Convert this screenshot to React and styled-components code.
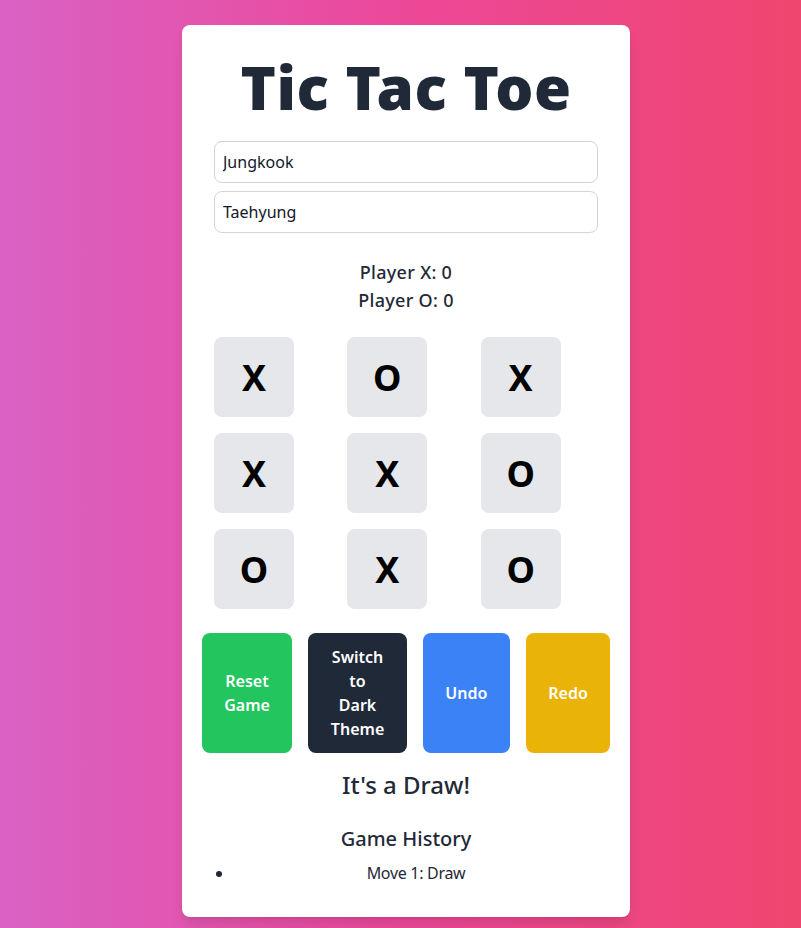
import React, { useState } from 'react';
import styled, { createGlobalStyle } from 'styled-components';

const GlobalStyle = createGlobalStyle`
    * {
        box-sizing: border-box;
    }
    body {
        margin: 0;
        font-family: "Noto Sans", "Open Sans", sans-serif;
    }
`

const board = ['X', 'O', 'X', 'X', 'X', 'O', 'O', 'X', 'O'];

const App = () => {
    const [playerX, setPlayerX] = useState('Jungkook');
    const [playerO, setPlayerO] = useState('Taehyung');

    return (
        <Page>
            <GlobalStyle />
            <Card>
                <Title>Tic Tac Toe</Title>
                <NameInput value={playerX} onChange={(e) => setPlayerX(e.target.value)} />
                <NameInput value={playerO} onChange={(e) => setPlayerO(e.target.value)} />
                <Scores>
                    <ScoreLine>Player X: 0</ScoreLine>
                    <ScoreLine>Player O: 0</ScoreLine>
                </Scores>
                <Board>
                    {board.map((mark, i) => (
                        <Cell key={i}>{mark}</Cell>
                    ))}
                </Board>
                <Controls>
                    <ActionButton color="#22c55e">Reset Game</ActionButton>
                    <ActionButton color="#1f2937">Switch to Dark Theme</ActionButton>
                    <ActionButton color="#3b82f6">Undo</ActionButton>
                    <ActionButton color="#eab308">Redo</ActionButton>
                </Controls>
                <Status>It's a Draw!</Status>
                <HistoryTitle>Game History</HistoryTitle>
                <HistoryList>
                    <HistoryItem>Move 1: Draw</HistoryItem>
                </HistoryList>
            </Card>
        </Page>
    )
}

const Page = styled.div`
    min-height: 100vh;
    display: flex;
    justify-content: center;
    align-items: flex-start;
    padding: 25px 0 12px 11px;
    background: linear-gradient(to right, #d962c4 0%, #ec4899 50%, #ef4670 100%);
`

const Card = styled.div`
    width: 448px;
    background: #ffffff;
    border-radius: 8px;
    padding: 32px;
    box-shadow: 0 10px 15px -3px rgba(0, 0, 0, 0.1), 0 4px 6px -4px rgba(0, 0, 0, 0.1);
    display: flex;
    flex-direction: column;
    color: #1f2937;
`

const Title = styled.h1`
    margin: 0 0 24px;
    font-size: 60px;
    line-height: 1;
    font-weight: 900;
    letter-spacing: 0.5px;
    text-align: center;
    color: #1f2937;
`

const NameInput = styled.input`
    width: 100%;
    margin-bottom: 8px;
    padding: 8px;
    font-family: inherit;
    font-size: 16px;
    line-height: 24px;
    color: #111827;
    border: 1px solid #d1d5db;
    border-radius: 8px;
    outline: none;
`

const Scores = styled.div`
    margin: 17px 0 23px;
    text-align: center;
`

const ScoreLine = styled.p`
    margin: 0;
    font-size: 18px;
    line-height: 28px;
    font-weight: 500;
    letter-spacing: 0.3px;
`

const Board = styled.div`
    display: grid;
    grid-template-columns: repeat(3, 1fr);
    gap: 16px;
`

const Cell = styled.button`
    width: 80px;
    height: 80px;
    border: none;
    border-radius: 8px;
    background: #e5e7eb;
    color: #000000;
    font-family: inherit;
    font-size: 36px;
    font-weight: 700;
    display: flex;
    align-items: center;
    justify-content: center;
    padding: 0;
`

const Controls = styled.div`
    margin-top: 24px;
    display: flex;
    justify-content: center;
    gap: 16px;
`

const ActionButton = styled.button`
    flex: 0 1 auto;
    padding: 12px 22.5px;
    border: none;
    border-radius: 8px;
    background: ${(p) => p.color};
    color: #ffffff;
    font-family: inherit;
    font-size: 16px;
    line-height: 24px;
    font-weight: 600;
    text-align: center;
`

const Status = styled.h2`
    margin: 16px 0 0;
    font-size: 24px;
    line-height: 32px;
    font-weight: 500;
    text-align: center;
`

const HistoryTitle = styled.h3`
    margin: 24px 0 0;
    font-size: 20px;
    line-height: 28px;
    font-weight: 500;
    text-align: center;
`

const HistoryList = styled.ul`
    margin: 8px 0 0;
    padding-left: 20px;
    list-style: disc;
`

const HistoryItem = styled.li`
    font-size: 16px;
    line-height: 24px;
    letter-spacing: -0.3px;
    text-align: center;
`

export default App
